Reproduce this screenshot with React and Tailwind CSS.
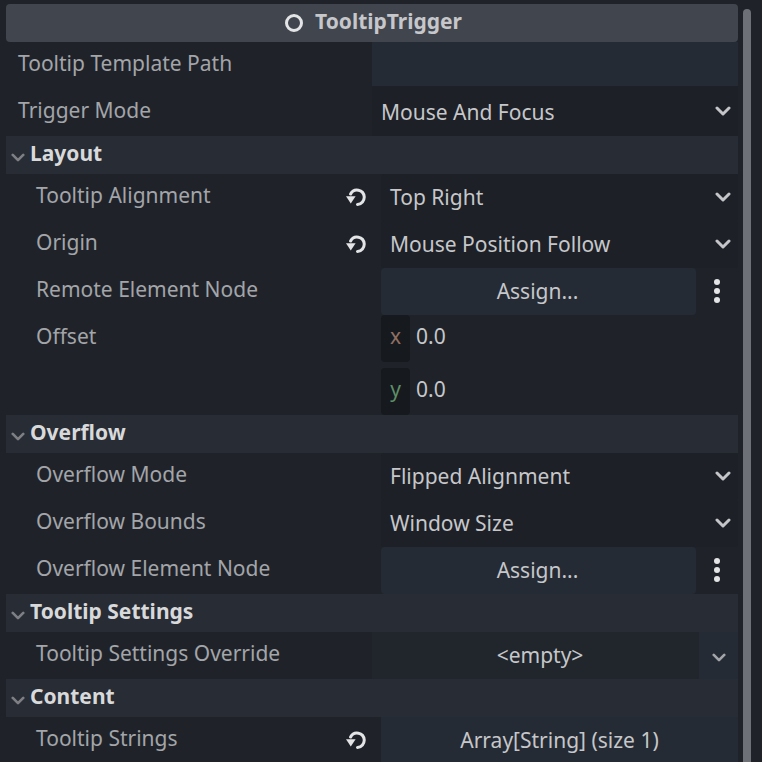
const FONT = "font-['Noto_Sans','Open_Sans',sans-serif]";

function Chevron({ className = 'text-[#c4c5c8]' }) {
    return (
        <svg width="16" height="10" viewBox="0 0 16 10" fill="none" className={className}>
            <path d="M2 2l6 6 6-6" stroke="currentColor" strokeWidth="3" strokeLinecap="round" strokeLinejoin="round" />
        </svg>
    );
}

function ResetIcon() {
    return (
        <svg width="20" height="18" viewBox="0 0 20 18" fill="none" className="text-[#e3e4e6]">
            <path d="M4.6 6A7.2 7.2 0 0 1 18.2 8.6A7.2 7.2 0 0 1 11.5 16.4" stroke="currentColor" strokeWidth="3" strokeLinecap="round" />
            <path d="M0 8.2h9.6L4.8 15.4z" fill="currentColor" />
        </svg>
    );
}

function Label({ children, nested = true, className = 'pb-[6px]' }) {
    return (
        <div className={`flex-1 text-[#a3a5a9] ${className} ${nested ? 'pl-[30px]' : 'pl-[12px]'}`}>
            {children}
        </div>
    );
}

function Section({ title }) {
    return (
        <div className="flex h-[38px] items-center bg-[#282c34] pl-[5px] font-bold text-[#d8d9db]">
            <Chevron className="mr-[5px] mt-[5px] h-[9px] w-[14px] text-[#7d7f84]" />
            <span className="pb-[4px]">{title}</span>
        </div>
    );
}

function SelectRow({ label, value, reset = false }) {
    return (
        <div className="flex h-[47px] items-center">
            <Label>{label}</Label>
            {reset && (
                <div className="mr-[15px] mb-[1px] flex w-[20px] justify-center">
                    <ResetIcon />
                </div>
            )}
            <div className="flex h-full w-[357px] items-center justify-between rounded-[3px] bg-[#1d2026] pl-[9px] pr-[7px] text-[#c6c7ca]">
                <span className="pb-[2px]">{value}</span>
                <Chevron className="mb-[1px] text-[#c4c5c8]" />
            </div>
        </div>
    );
}

function AssignRow({ label }) {
    return (
        <div className="flex h-[47px] items-center">
            <Label>{label}</Label>
            <div className="flex h-full w-[357px] items-center">
                <div className="flex h-full w-[315px] items-center justify-center rounded-[4px] bg-[#252b34] pb-[2px] pr-[2px] text-[#c6c7ca]">
                    Assign...
                </div>
                <div className="mb-[2px] flex w-[42px] flex-col items-center gap-[3px]">
                    <span className="h-[6px] w-[6px] rounded-full bg-[#e3e4e6]" />
                    <span className="h-[6px] w-[6px] rounded-full bg-[#e3e4e6]" />
                    <span className="h-[6px] w-[6px] rounded-full bg-[#e3e4e6]" />
                </div>
            </div>
        </div>
    );
}

function AxisField({ axis, color }) {
    return (
        <div className="flex h-[47px] w-[357px] items-center text-[#c6c7ca]">
            <div className={`flex h-full w-[29px] items-center justify-center rounded-[4px] bg-[#16191e] pb-[6px] ${color}`}>
                {axis}
            </div>
            <span className="ml-[6px] pb-[6px]">0.0</span>
        </div>
    );
}

export default function App() {
    return (
        <div className={`flex h-[762px] w-[762px] overflow-hidden bg-[#1f2329] text-[21px] leading-[30px] ${FONT}`}>
            <div className="ml-[6px] mt-[4px] w-[732px]">
                <div className="flex h-[38px] items-center justify-center gap-[12px] rounded-[4px] bg-[#41454d] pl-[3px] font-bold text-[#c6c7ca]">
                    <span className="h-[18px] w-[18px] rounded-full border-[3px] border-[#e3e4e6]" />
                    <span className="pb-[4px]">TooltipTrigger</span>
                </div>

                <div className="flex h-[44px] items-center">
                    <Label nested={false} className="pb-[2px]">Tooltip Template Path</Label>
                    <div className="h-full w-[366px] bg-[#252b34]" />
                </div>
                <div className="flex h-[50px] items-center">
                    <Label nested={false} className="pb-[2px]">Trigger Mode</Label>
                    <div className="flex h-full w-[366px] items-center justify-between bg-[#1d2026] pl-[9px] pr-[7px] text-[#c6c7ca]">
                        <span className="pt-[2px]">Mouse And Focus</span>
                        <Chevron />
                    </div>
                </div>

                <Section title="Layout" />
                <SelectRow label="Tooltip Alignment" value="Top Right" reset />
                <SelectRow label="Origin" value="Mouse Position Follow" reset />
                <AssignRow label="Remote Element Node" />
                <div className="flex h-[100px]">
                    <div className="flex-1 pt-[6px] pl-[30px] text-[#a3a5a9]">Offset</div>
                    <div className="flex w-[357px] flex-col gap-[6px]">
                        <AxisField axis="x" color="text-[#8f6f62]" />
                        <AxisField axis="y" color="text-[#5d8f66]" />
                    </div>
                </div>

                <Section title="Overflow" />
                <SelectRow label="Overflow Mode" value="Flipped Alignment" />
                <SelectRow label="Overflow Bounds" value="Window Size" />
                <AssignRow label="Overflow Element Node" />

                <Section title="Tooltip Settings" />
                <div className="flex h-[47px] items-center">
                    <Label>Tooltip Settings Override</Label>
                    <div className="flex h-full w-[327px] items-center justify-center bg-[#21252c] pl-[9px] pb-[2px] text-[#c6c7ca]">
                        &lt;empty&gt;
                    </div>
                    <div className="flex h-full w-[39px] items-center justify-center bg-[#252b34]">
                        <Chevron className="mt-[4px] h-[9px] w-[14px] text-[#a3a5a9]" />
                    </div>
                </div>

                <Section title="Content" />
                <div className="flex h-[47px] items-center">
                    <Label>Tooltip Strings</Label>
                    <div className="mr-[15px] mb-[1px] flex w-[20px] justify-center">
                        <ResetIcon />
                    </div>
                    <div className="flex h-full w-[357px] items-center justify-center bg-[#252b34] pb-[2px] text-[#c6c7ca]">
                        Array[String] (size 1)
                    </div>
                </div>
            </div>
            <div className="ml-[5px] mt-[9px] h-[753px] w-[8px] rounded-t-[4px] bg-[#6d7076]" />
        </div>
    );
}
